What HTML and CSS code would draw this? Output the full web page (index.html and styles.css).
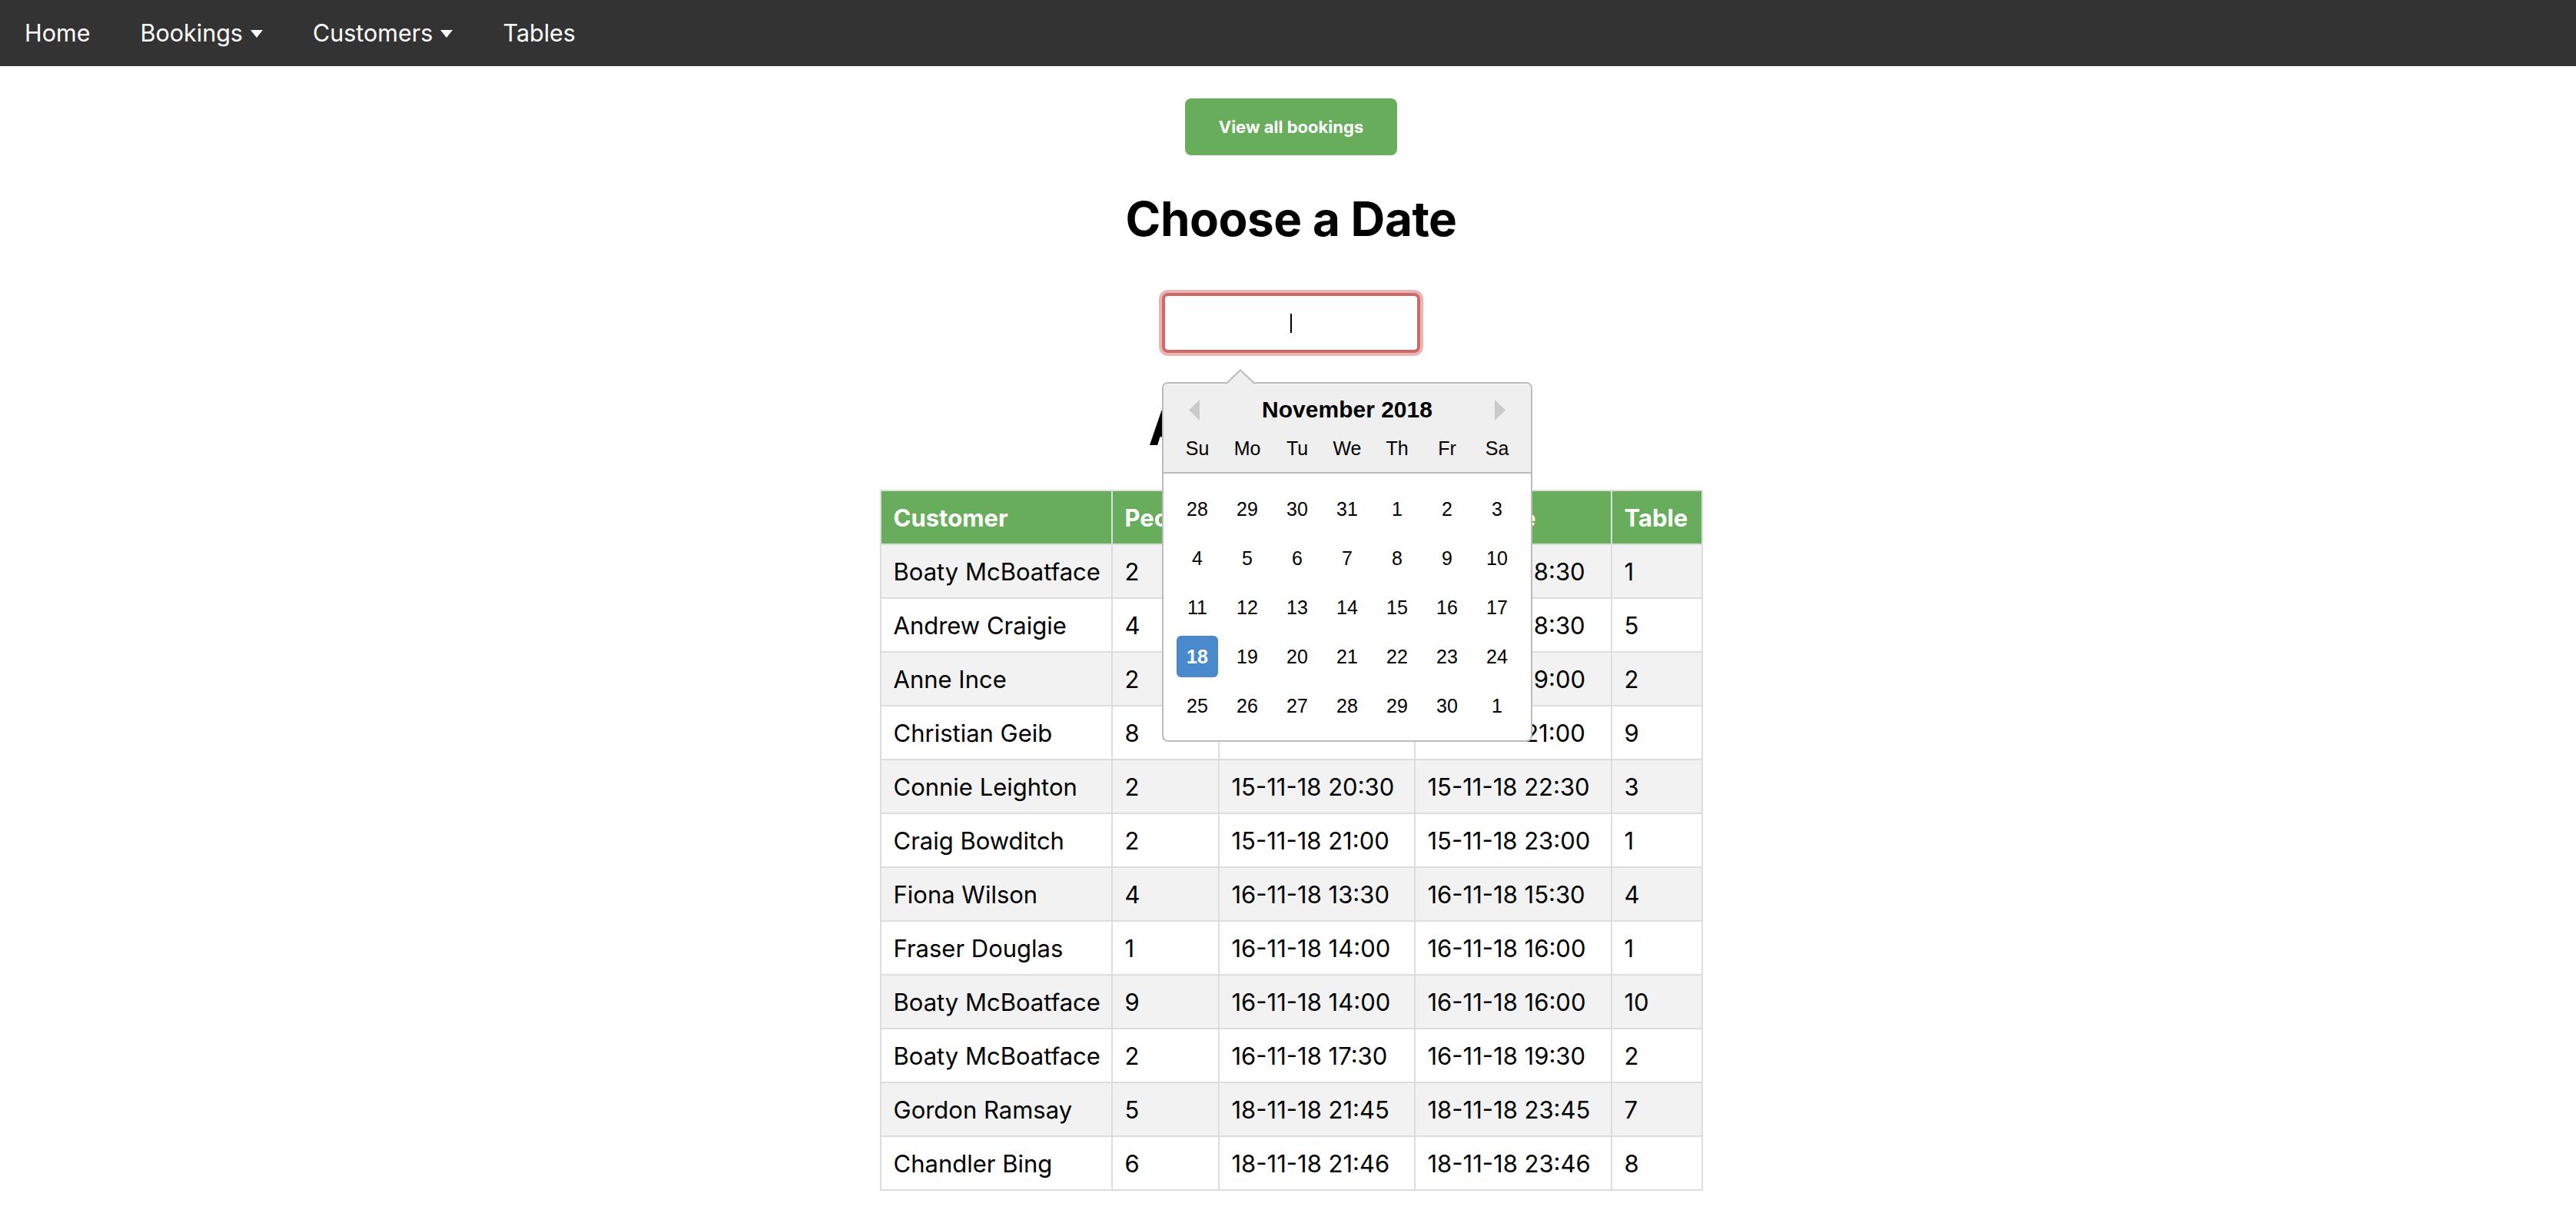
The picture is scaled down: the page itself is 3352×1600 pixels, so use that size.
FILE: index.html
```html
<!DOCTYPE html>
<html lang="en">
<head>
<meta charset="utf-8">
<title>Bookings</title>
<link rel="stylesheet" href="styles.css">
</head>
<body>
<nav class="topnav">
  <a class="nav-link" href="#">Home</a>
  <a class="nav-link" href="#">Bookings<span class="nav-caret"></span></a>
  <a class="nav-link" href="#">Customers<span class="nav-caret"></span></a>
  <a class="nav-link" href="#">Tables</a>
</nav>
<main class="page">
  <a class="btn" href="#">View all bookings</a>
  <h1 class="title">Choose a Date</h1>
  <div class="date-picker">
    <input class="date-input" type="text" aria-label="Date">
    <span class="text-caret"></span>
    <div class="calendar">
      <svg class="cal-pointer" width="36" height="20" viewBox="0 0 36 20">
        <polygon points="0,20 18,1.5 36,20" fill="#efefef"/>
        <polyline points="0,18.5 18,1.5 36,18.5" fill="none" stroke="#bcbcbc" stroke-width="2"/>
      </svg>
      <div class="cal-head">
        <div class="cal-title-row">
          <svg class="cal-arrow" width="14" height="27" viewBox="0 0 14 27"><polygon points="14,0 0,13.5 14,27" fill="#cacaca"/></svg>
          <span class="cal-title">November 2018</span>
          <svg class="cal-arrow" width="14" height="27" viewBox="0 0 14 27"><polygon points="0,0 14,13.5 0,27" fill="#cacaca"/></svg>
        </div>
        <div class="cal-grid cal-weekdays">
          <span>Su</span><span>Mo</span><span>Tu</span><span>We</span><span>Th</span><span>Fr</span><span>Sa</span>
        </div>
      </div>
      <div class="cal-grid cal-days">
        <span>28</span><span>29</span><span>30</span><span>31</span><span>1</span><span>2</span><span>3</span>
        <span>4</span><span>5</span><span>6</span><span>7</span><span>8</span><span>9</span><span>10</span>
        <span>11</span><span>12</span><span>13</span><span>14</span><span>15</span><span>16</span><span>17</span>
        <span><b class="day-selected">18</b></span><span>19</span><span>20</span><span>21</span><span>22</span><span>23</span><span>24</span>
        <span>25</span><span>26</span><span>27</span><span>28</span><span>29</span><span>30</span><span>1</span>
      </div>
    </div>
  </div>
  <h2 class="title subtitle">All Bookings</h2>
  <table class="bookings">
    <colgroup>
      <col class="c-customer"><col class="c-people"><col class="c-start"><col class="c-end"><col class="c-table">
    </colgroup>
    <thead>
      <tr><th>Customer</th><th>People</th><th>Start Time</th><th>End Time</th><th>Table</th></tr>
    </thead>
    <tbody>
      <tr><td>Boaty McBoatface</td><td>2</td><td>15-11-18 16:30</td><td>15-11-18 18:30</td><td>1</td></tr>
      <tr><td>Andrew Craigie</td><td>4</td><td>15-11-18 16:30</td><td>15-11-18 18:30</td><td>5</td></tr>
      <tr><td>Anne Ince</td><td>2</td><td>15-11-18 17:00</td><td>15-11-18 19:00</td><td>2</td></tr>
      <tr><td>Christian Geib</td><td>8</td><td>15-11-18 19:00</td><td>15-11-18 21:00</td><td>9</td></tr>
      <tr><td>Connie Leighton</td><td>2</td><td>15-11-18 20:30</td><td>15-11-18 22:30</td><td>3</td></tr>
      <tr><td>Craig Bowditch</td><td>2</td><td>15-11-18 21:00</td><td>15-11-18 23:00</td><td>1</td></tr>
      <tr><td>Fiona Wilson</td><td>4</td><td>16-11-18 13:30</td><td>16-11-18 15:30</td><td>4</td></tr>
      <tr><td>Fraser Douglas</td><td>1</td><td>16-11-18 14:00</td><td>16-11-18 16:00</td><td>1</td></tr>
      <tr><td>Boaty McBoatface</td><td>9</td><td>16-11-18 14:00</td><td>16-11-18 16:00</td><td>10</td></tr>
      <tr><td>Boaty McBoatface</td><td>2</td><td>16-11-18 17:30</td><td>16-11-18 19:30</td><td>2</td></tr>
      <tr><td>Gordon Ramsay</td><td>5</td><td>18-11-18 21:45</td><td>18-11-18 23:45</td><td>7</td></tr>
      <tr><td>Chandler Bing</td><td>6</td><td>18-11-18 21:46</td><td>18-11-18 23:46</td><td>8</td></tr>
    </tbody>
  </table>
</main>
</body>
</html>
```

FILE: styles.css
```css
* { box-sizing: border-box; }

html, body {
  margin: 0;
  padding: 0;
  background: #ffffff;
  color: #000000;
  font-family: Inter, "Noto Sans", sans-serif;
}

.topnav {
  display: flex;
  align-items: center;
  gap: 1px;
  height: 86px;
  background: #333333;
}

.nav-link {
  display: flex;
  align-items: center;
  padding: 0 32px;
  color: #ffffff;
  text-decoration: none;
  font-size: 30.5px;
  line-height: 40px;
}

.nav-caret {
  width: 0;
  height: 0;
  margin-left: 10px;
  margin-top: 2px;
  border-left: 8.5px solid transparent;
  border-right: 8.5px solid transparent;
  border-top: 10px solid #ffffff;
}

.page {
  display: flex;
  flex-direction: column;
  align-items: center;
  padding: 0 0 40px 8px;
}

.btn {
  display: flex;
  align-items: center;
  justify-content: center;
  width: 276px;
  height: 74px;
  margin-top: 42px;
  background: #67ad5b;
  border-radius: 8px;
  color: #ffffff;
  text-decoration: none;
  font-size: 22px;
  font-weight: 700;
}

.title {
  margin: 45px 0 0;
  font-size: 62px;
  line-height: 76px;
  font-weight: 700;
  letter-spacing: -0.5px;
}

.subtitle {
  margin-top: 60px;
}

.date-picker {
  position: relative;
  width: 336px;
  height: 78px;
  margin-top: 58px;
}

.date-input {
  display: block;
  width: 100%;
  height: 100%;
  border: 4px solid #cf6967;
  border-radius: 8px;
  box-shadow: 0 0 0 4px rgba(214, 110, 108, 0.5);
  background: #ffffff;
  outline: none;
  font-size: 28px;
  text-align: center;
}

.text-caret {
  position: absolute;
  left: 167px;
  top: 27px;
  width: 2px;
  height: 25px;
  background: #000000;
}

.calendar {
  position: absolute;
  top: 116px;
  left: 0;
  z-index: 10;
  width: 482px;
  height: 468px;
  background: #ffffff;
  border: 2px solid #bcbcbc;
  border-radius: 8px;
  font-family: "Liberation Sans", Arial, sans-serif;
  color: #000000;
}

.cal-pointer {
  position: absolute;
  left: 82px;
  top: -19px;
}

.cal-head {
  height: 117px;
  padding-top: 4px;
  background: #efefef;
  border-bottom: 2px solid #bcbcbc;
  border-radius: 6px 6px 0 0;
}

.cal-title-row {
  display: flex;
  align-items: center;
  justify-content: space-between;
  height: 60px;
  padding: 0 33px;
}

.cal-title {
  font-size: 30px;
  font-weight: 700;
}

.cal-grid {
  display: grid;
  grid-template-columns: repeat(7, 65px);
  justify-content: center;
}

.cal-grid span {
  display: flex;
  align-items: center;
  justify-content: center;
}

.cal-weekdays span {
  height: 40px;
  font-size: 25px;
}

.cal-days {
  padding-top: 14px;
}

.cal-days span {
  height: 64px;
  font-size: 25px;
}

.day-selected {
  display: flex;
  align-items: center;
  justify-content: center;
  width: 54px;
  height: 54px;
  border-radius: 6px;
  background: #4a89cd;
  color: #ffffff;
  font-weight: 700;
}

.bookings {
  width: 1069px;
  margin-top: 42px;
  table-layout: fixed;
  border-collapse: collapse;
  font-size: 31px;
}

.c-customer { width: 301px; }
.c-people { width: 139px; }
.c-start { width: 255px; }
.c-end { width: 256px; }
.c-table { width: 118px; }

.bookings th,
.bookings td {
  height: 70px;
  padding: 0 16px;
  border: 2px solid #dddddd;
  text-align: left;
  white-space: nowrap;
}

.bookings th {
  background: #67ad5b;
  color: #ffffff;
  font-weight: 700;
}

.bookings tbody tr:nth-child(odd) {
  background: #f2f2f2;
}
```
